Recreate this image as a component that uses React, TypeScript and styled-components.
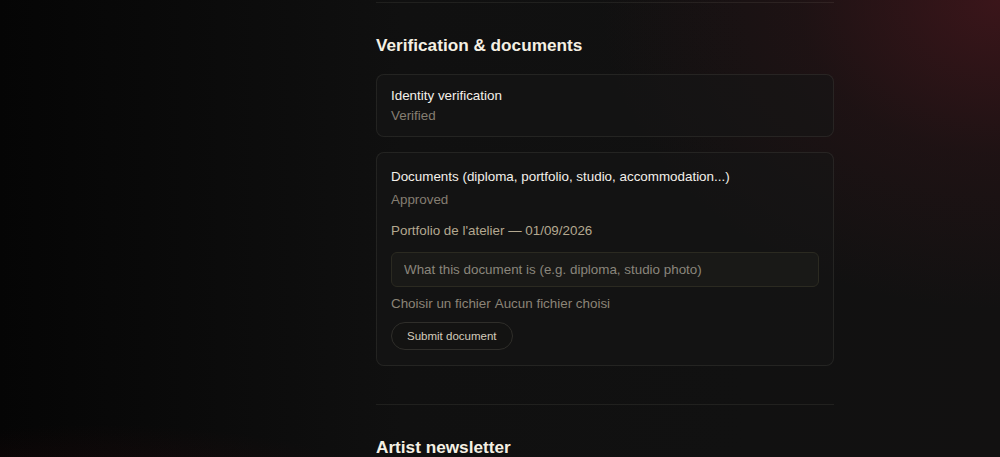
import React from 'react';
import styled, {createGlobalStyle} from 'styled-components';

const GlobalStyle = createGlobalStyle`
  html, body {
    margin: 0;
    padding: 0;
    background: #0e0e0e;
  }
  body {
    min-height: 457px;
    font-family: "Liberation Sans", Arial, sans-serif;
    color: #f2eee6;
    background:
      radial-gradient(ellipse 400px 310px at 100% 0%, rgba(86, 24, 32, 0.6), rgba(86, 24, 32, 0.18) 50%, rgba(86, 24, 32, 0) 100%),
      radial-gradient(ellipse 320px 90px at 10% 100%, rgba(70, 14, 18, 0.3), rgba(70, 14, 18, 0) 100%),
      linear-gradient(90deg, #050505 0%, #0b0b0b 22%, #101010 40%, #111111 75%, #121111 100%);
  }
`;

const Page = styled.div`
  display: grid;
  grid-template-columns: 210px 1fr;
  min-height: 457px;
`;

const Aside = styled.aside``;

const Main = styled.main`
  display: flex;
  justify-content: center;
  padding-top: 2px;
`;

const Column = styled.div`
  width: 458px;
  display: flex;
  flex-direction: column;
`;

const Section = styled.section`
  border-top: 1px solid rgba(255, 250, 220, 0.07);
  padding: 29px 0 38px;
`;

const Heading = styled.h2`
  margin: 0 0 15px;
  font-size: 17.2px;
  line-height: 27px;
  font-weight: 700;
  color: #f5f0e3;
`;

const Cards = styled.div`
  display: flex;
  flex-direction: column;
  gap: 15px;
`;

const Card = styled.div<{$pad: number}>`
  display: flex;
  flex-direction: column;
  align-items: flex-start;
  padding: ${p => p.$pad}px 14px;
  border: 1px solid rgba(255, 248, 225, 0.07);
  border-radius: 8px;
  background: rgba(22, 22, 21, 0.6);
`;

const Title = styled.div`
  font-size: 13.4px;
  line-height: 17px;
  color: #f3f0ea;
`;

const Status = styled.div<{$gap: number}>`
  margin-top: ${p => p.$gap}px;
  font-size: 13.4px;
  line-height: 17px;
  color: #857e72;
`;

const DocLine = styled.div`
  margin-top: 14px;
  font-size: 13.4px;
  line-height: 17px;
  color: #b3a890;
`;

const Input = styled.input`
  box-sizing: border-box;
  margin-top: 13px;
  width: 100%;
  height: 35px;
  padding: 0 12px;
  border: 1px solid #2b2a21;
  border-radius: 6px;
  background: #191917;
  font-family: "Liberation Sans", Arial, sans-serif;
  font-size: 13.4px;
  color: #e8e3d8;
  outline: none;

  &::placeholder {
    color: #8a867c;
  }
`;

const FileRow = styled.label`
  margin-top: 8px;
  font-size: 13.4px;
  line-height: 17px;
  color: #8b8477;
  display: flex;
  gap: 4px;
`;

const Button = styled.button`
  margin-top: 10px;
  height: 28px;
  padding: 0 15px;
  border: 1px solid #2f2e2a;
  border-radius: 14px;
  background: #131312;
  font-family: "Liberation Sans", Arial, sans-serif;
  font-size: 11.5px;
  color: #d3ccbc;
  cursor: pointer;
`;

const App = () => (
  <>
    <GlobalStyle />
    <Page>
      <Aside />
      <Main>
        <Column>
          <Section>
            <Heading>Verification &amp; documents</Heading>
            <Cards>
              <Card $pad={12}>
                <Title>Identity verification</Title>
                <Status $gap={3}>Verified</Status>
              </Card>
              <Card $pad={15}>
                <Title>Documents (diploma, portfolio, studio, accommodation...)</Title>
                <Status $gap={6}>Approved</Status>
                <DocLine>Portfolio de l'atelier — 01/09/2026</DocLine>
                <Input placeholder="What this document is (e.g. diploma, studio photo)" />
                <FileRow>
                  <span>Choisir un fichier</span>
                  <span>Aucun fichier choisi</span>
                </FileRow>
                <Button type="button">Submit document</Button>
              </Card>
            </Cards>
          </Section>
          <Section>
            <Heading>Artist newsletter</Heading>
          </Section>
        </Column>
      </Main>
    </Page>
  </>
);

export default App;
